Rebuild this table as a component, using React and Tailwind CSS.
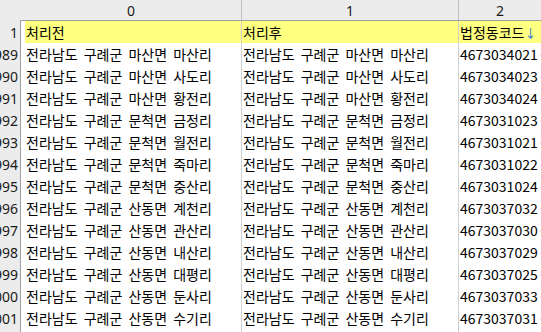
import React from "react";

const rows = [
  ["1989", "마산면 마산리", "4673034021"],
  ["1990", "마산면 사도리", "4673034023"],
  ["1991", "마산면 황전리", "4673034024"],
  ["1992", "문척면 금정리", "4673031023"],
  ["1993", "문척면 월전리", "4673031021"],
  ["1994", "문척면 죽마리", "4673031022"],
  ["1995", "문척면 중산리", "4673031024"],
  ["1996", "산동면 계천리", "4673037032"],
  ["1997", "산동면 관산리", "4673037030"],
  ["1998", "산동면 내산리", "4673037029"],
  ["1999", "산동면 대평리", "4673037025"],
  ["2000", "산동면 둔사리", "4673037033"],
  ["2001", "산동면 수기리", "4673037031"],
  ["2002", "산동면 원촌리", "4673037026"],
];

const kr = { fontFamily: '"Noto Sans CJK KR", "Noto Sans", sans-serif' };
const num = { fontFamily: '"Noto Sans", "Liberation Sans", sans-serif' };

function RowHead({ n }) {
  return (
    <div
      className="w-[20px] shrink-0 h-full bg-[#ececec] flex justify-end items-center overflow-hidden whitespace-nowrap pr-[2px] text-[14px] text-[#1a1a1a]"
      style={num}
    >
      {n}
    </div>
  );
}

function Row({ n, a, b, c, yellow }) {
  const bg = yellow ? "bg-[#ffff80]" : "bg-white";
  return (
    <div className="flex h-[22px] w-[541px] shrink-0">
      <RowHead n={n} />
      <div className="w-[1px] shrink-0 bg-[#a0a0a0]" />
      <div className="w-[4px] shrink-0 bg-white" />
      <div
        className={`w-[216px] shrink-0 ${bg} flex items-center pl-[1px] overflow-hidden whitespace-nowrap text-[14px] text-black [word-spacing:3px]`}
        style={kr}
      >
        {a}
      </div>
      <div className="w-[1px] shrink-0 bg-[#d0d0d0]" />
      <div
        className={`w-[216px] shrink-0 ${bg} flex items-center pl-[1px] overflow-hidden whitespace-nowrap text-[14px] text-black [word-spacing:3px]`}
        style={kr}
      >
        {b}
      </div>
      <div className="w-[1px] shrink-0 bg-[#d0d0d0]" />
      <div
        className={`flex-1 ${bg} flex items-center pl-[1px] overflow-hidden whitespace-nowrap text-[14px] text-black`}
        style={kr}
      >
        {c}
      </div>
    </div>
  );
}

export default function App() {
  return (
    <div className="w-[541px] h-[332px] overflow-hidden bg-white flex flex-col">
      <div className="flex h-[20px] shrink-0 bg-[#ececec] text-[14px] text-[#1a1a1a]" style={num}>
        <div className="w-[21px] shrink-0" />
        <div className="w-[220px] shrink-0 flex items-center justify-center">0</div>
        <div className="w-[1px] shrink-0 bg-[#c0c0c0]" />
        <div className="w-[216px] shrink-0 flex items-center justify-center">1</div>
        <div className="w-[1px] shrink-0 bg-[#c0c0c0]" />
        <div className="flex-1 flex items-center justify-center">2</div>
      </div>
      <div className="flex h-[1px] shrink-0">
        <div className="w-[20px] bg-[#ececec]" />
        <div className="flex-1 bg-[#a0a0a0]" />
      </div>
      <Row
        n="1"
        yellow
        a="처리전"
        b="처리후"
        c={
          <span>
            법정동코드<span className="text-[12px] text-[#1e6fd9]">↓</span>
          </span>
        }
      />
      {rows.map(([n, t, code]) => (
        <Row
          key={n}
          n={n}
          a={`전라남도 구례군 ${t}`}
          b={`전라남도 구례군 ${t}`}
          c={
            <span style={kr}>
              {code}
              <span className="text-[#1e6fd9]">·</span>
            </span>
          }
        />
      ))}
    </div>
  );
}
